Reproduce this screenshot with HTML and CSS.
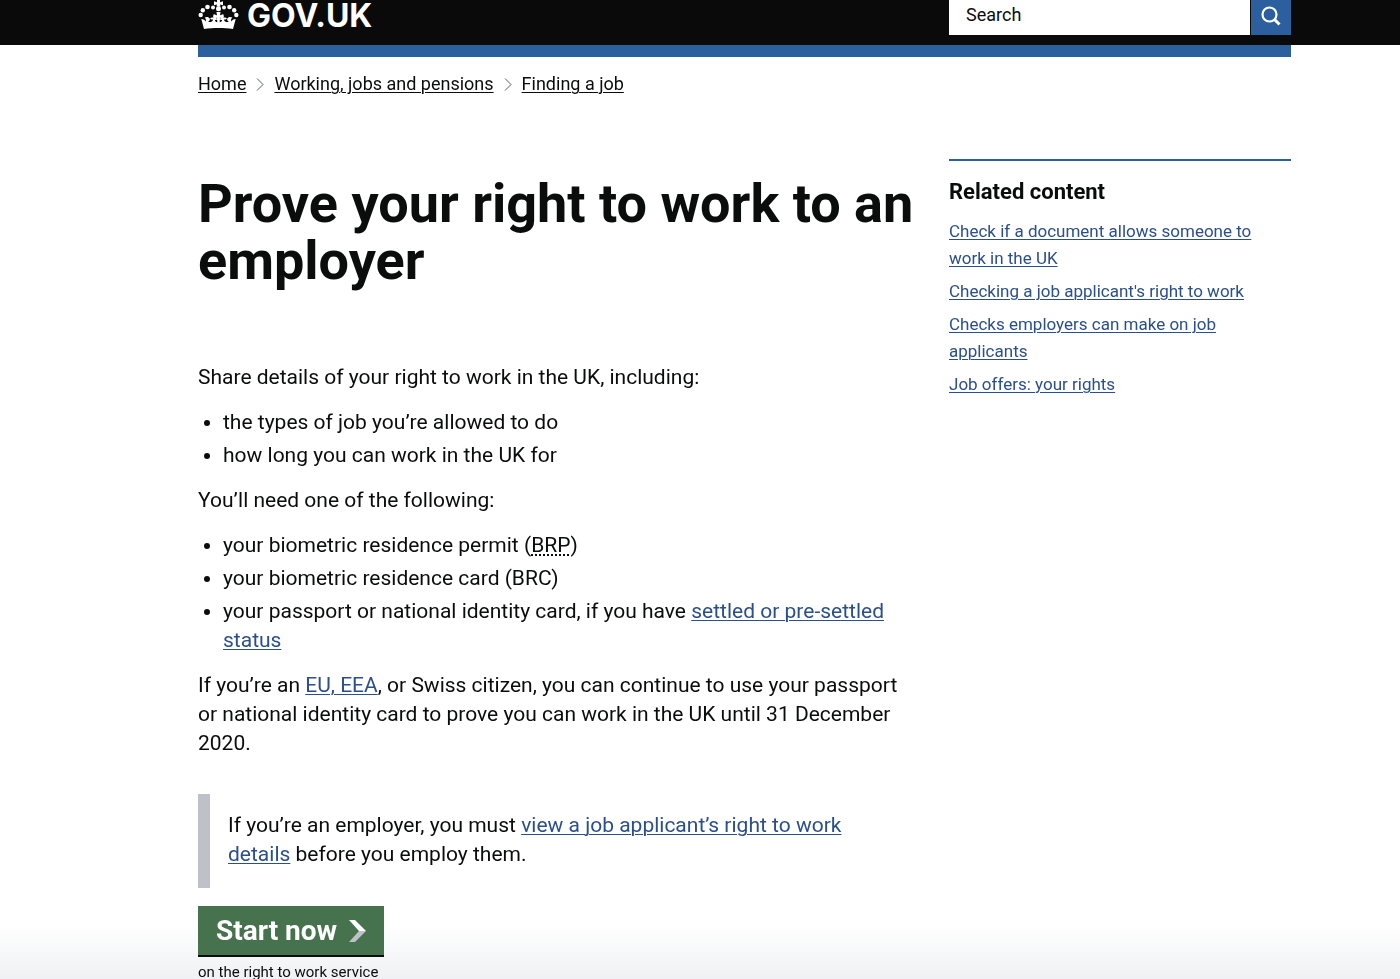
FILE: index.html
```html
<!DOCTYPE html>
<html lang="en">
<head>
<meta charset="utf-8">
<meta name="viewport" content="width=device-width, initial-scale=1">
<title>Prove your right to work to an employer - GOV.UK</title>
<link rel="stylesheet" href="styles.css">
</head>
<body>
<header class="site-header">
  <div class="container header-row">
    <a class="logo" href="#">
      <svg class="crown" viewBox="0 0 41 30" aria-hidden="true">
        <g fill="#fff">
          <path d="M19 0h3v2.200l3-.9v4l-3-.9.500 2.200h-4l.5-2.200-3 .9v-4l3 .9z"/>
          <circle cx="20.500" cy="8.800" r="2.500"/>
          <circle cx="15" cy="7.600" r="2"/><circle cx="9.500" cy="7" r="2.300"/><circle cx="4.800" cy="10.200" r="2.200"/><circle cx="2.700" cy="15" r="2.200"/>
          <circle cx="26" cy="7.600" r="2"/><circle cx="31.500" cy="7" r="2.300"/><circle cx="36.200" cy="10.200" r="2.200"/><circle cx="38.300" cy="15" r="2.200"/>
          <path d="M6 29L3.300 19c2.300.1 3.500 1 4.400 2.600.6-1.500.2-2.800-1-4 2-1.200 4.300-.6 5 1 .6 1.600-.4 2.800-1.600 3.100 2 1 4.500 0 5-2.300-1.300.5-2.500 0-3-1.200 1-.9 2.400-.9 3.300-.3-.5-1.500-.2-2.900.7-4.100 1 1.200 1.300 2.500.8 4 1.200-.2 2.300.6 2.300 1.800-.8.600-1.600.6-2.400.2.2 1.500 1.200 2.300 2.500 2.400l-.3-4.600c-.8.700-1.700.9-2.600.4v-3c.9-.5 1.800-.3 2.700.4l-.7-3.400h4.200l-.7 3.400c.9-.7 1.800-.9 2.700-.4v3c-.9.500-1.800.3-2.600-.4l-.3 4.600c1.300-.1 2.300-.9 2.500-2.400-.8.400-1.600.4-2.400-.2 0-1.200 1.100-2 2.300-1.800-.5-1.500-.2-2.800.8-4 .9 1.200 1.200 2.600.7 4.100.9-.6 2.300-.6 3.300.3-.5 1.200-1.700 1.700-3 1.200.5 2.300 3 3.300 5 2.300-1.200-.3-2.200-1.500-1.600-3.100.7-1.600 3-2.200 5-1-1.200 1.200-1.600 2.500-1 4 .9-1.600 2.100-2.500 4.400-2.600L35 29c-9-1.400-20-1.400-29 0z"/>
        </g>
      </svg>
      <span class="logo-text">GOV.UK</span>
    </a>
    <form class="search" role="search">
      <input class="search-input" type="search" aria-label="Search" placeholder="Search">
      <button class="search-button" type="submit" aria-label="Search GOV.UK">
        <svg width="20" height="20" viewBox="0 0 20 20" fill="none" stroke="#fff" aria-hidden="true"><circle cx="8.500" cy="8.500" r="7" stroke-width="2.200"/><path d="M13.500 13.500l5 5" stroke-width="3"/></svg>
      </button>
    </form>
  </div>
</header>

<div class="container">
  <div class="blue-bar"></div>
  <nav aria-label="Breadcrumb">
    <ol class="breadcrumbs">
      <li><a href="#">Home</a></li>
      <li><svg width="8" height="13" viewBox="0 0 8 13" fill="none" stroke="#505a5f" aria-hidden="true"><path d="M1 .5l6 6-6 6"/></svg><a href="#">Working, jobs and pensions</a></li>
      <li><svg width="8" height="13" viewBox="0 0 8 13" fill="none" stroke="#505a5f" aria-hidden="true"><path d="M1 .5l6 6-6 6"/></svg><a href="#">Finding a job</a></li>
    </ol>
  </nav>

  <div class="columns">
    <main class="content">
      <h1>Prove your right to work to an employer</h1>
      <p>Share details of your right to work in the UK, including:</p>
      <ul>
        <li>the types of job you’re allowed to do</li>
        <li>how long you can work in the UK for</li>
      </ul>
      <p>You’ll need one of the following:</p>
      <ul>
        <li>your biometric residence permit (<abbr title="biometric residence permit">BRP</abbr>)</li>
        <li>your biometric residence card (BRC)</li>
        <li>your passport or national identity card, if you have <a href="#">settled or pre-settled status</a></li>
      </ul>
      <p>If you’re an <a href="#">EU, EEA</a>, or Swiss citizen, you can continue to use your passport or national identity card to prove you can work in the UK until 31 December 2020.</p>
      <div class="inset">
        <p>If you’re an employer, you must <a href="#">view a job applicant’s right to work details</a> before you employ them.</p>
      </div>
      <a class="start-button" href="#">Start now
        <svg width="17" height="22" viewBox="0 0 17 22" aria-hidden="true"><path d="M0 0h6l11 11H10z" fill="#fff"/><path d="M10 11h7L6 22H0z" fill="#bfc1c9"/></svg>
      </a>
      <p class="hint">on the right to work service</p>
    </main>

    <aside class="related">
      <h2>Related content</h2>
      <ul>
        <li><a href="#">Check if a document allows someone to work in the UK</a></li>
        <li><a href="#">Checking a job applicant's right to work</a></li>
        <li><a href="#">Checks employers can make on job applicants</a></li>
        <li><a href="#">Job offers: your rights</a></li>
      </ul>
    </aside>
  </div>
</div>
<div class="page-fade"></div>
</body>
</html>
```
FILE: styles.css
```css
* {
  box-sizing: border-box;
}

body {
  margin: 0;
  height: 100vh;
  overflow: hidden;
  background: #fff;
  color: #0b0c0c;
  font-family: Roboto, Arial, sans-serif;
  font-size: 21px;
  line-height: 29px;
}

h1, h2, p, ul, ol {
  margin: 0;
  padding: 0;
}

ol, aside ul {
  list-style: none;
}

a {
  color: #2b4f8c;
  text-decoration-thickness: 1px;
  text-underline-offset: 2px;
}

.container {
  padding: 0 109px 0 198px;
}

.site-header {
  background: #0a0a0a;
}

.header-row {
  display: flex;
  justify-content: space-between;
  align-items: flex-start;
  height: 45px;
}

.logo {
  display: flex;
  align-items: flex-start;
  gap: 8px;
  color: #fff;
  text-decoration: none;
}

.crown {
  width: 41px;
  height: 30px;
}

.logo-text {
  font-family: Inter, Arial, sans-serif;
  font-size: 32px;
  font-weight: 700;
  line-height: 32px;
}

.search {
  display: flex;
  gap: 1px;
  width: 342px;
  height: 35px;
}

.search-input {
  flex: 1;
  min-width: 0;
  padding: 0 17px 6px;
  border: 0;
  border-radius: 0;
  background: #fff;
  color: #0b0c0c;
  font: 18px Roboto, Arial, sans-serif;
  appearance: none;
}

.search-input::placeholder {
  color: #0b0c0c;
  opacity: 1;
}

.search-button {
  display: flex;
  align-items: center;
  justify-content: center;
  width: 40px;
  padding: 0 0 3px;
  border: 0;
  background: #2b5f9e;
}

.blue-bar {
  height: 12px;
  background: #2b5f9e;
}

.breadcrumbs {
  display: flex;
  gap: 10px;
  padding-top: 16px;
  font-size: 18px;
  line-height: 22px;
}

.breadcrumbs li {
  display: flex;
  align-items: center;
  gap: 10px;
}

.breadcrumbs a {
  color: #0b0c0c;
}

.columns {
  display: grid;
  grid-template-columns: minmax(0, 1fr) 342px;
  gap: 34px;
  padding-top: 64px;
}

.content {
  padding-top: 16px;
}

h1 {
  margin-bottom: 74px;
  font-size: 54px;
  font-weight: 700;
  line-height: 57px;
}

.content p,
.content ul {
  margin-bottom: 16px;
}

.content ul {
  padding-left: 25px;
}

.content li + li {
  margin-top: 4px;
}

abbr {
  text-decoration: underline dotted 2px;
  text-underline-offset: 2px;
}

.inset {
  margin: 36px 0 18px;
  padding: 17px 18px 19px;
  border-left: 12px solid #bfc1c9;
}

.content .inset p {
  margin: 0;
}

.start-button {
  display: inline-flex;
  align-items: center;
  gap: 12px;
  padding: 10px 18px;
  border-bottom: 2px solid #0b0c0c;
  background: #47724e;
  color: #fff;
  font-size: 28px;
  font-weight: 700;
  text-decoration: none;
}

.start-button + .hint {
  margin: 5px 0 0;
  font-size: 15px;
  line-height: 20px;
}

.related {
  border-top: 2px solid #2b5f9e;
  font-size: 17px;
  line-height: 27px;
}

.related h2 {
  margin: 18px 0 13px;
  font-size: 22px;
  line-height: 26px;
}

.related li + li {
  margin-top: 6px;
}

.page-fade {
  position: fixed;
  inset: auto 0 0;
  z-index: -1;
  height: 54px;
  background: linear-gradient(#fff, #f0f1f4);
}
```
